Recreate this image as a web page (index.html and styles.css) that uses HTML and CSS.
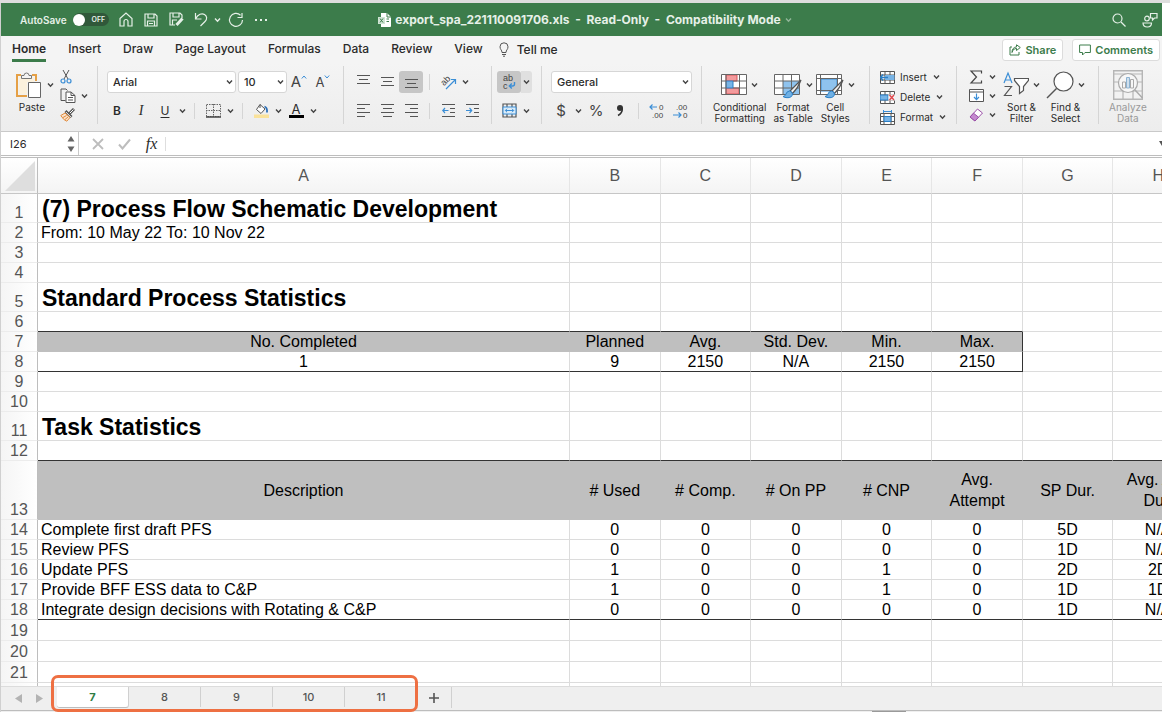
FILE: index.html
```html
<!DOCTYPE html>
<html lang="en">
<head>
    <meta charset="UTF-8">
    <meta name="viewport" content="width=device-width, initial-scale=1.0">
    <title>export_spa_221110091706.xls</title>
    <link rel="stylesheet" href="styles.css">
</head>
<body>
    <!-- shared icons -->
    <svg class="sprite" aria-hidden="true">
        <symbol id="chev" viewBox="0 0 7 6"><path d="M1 1.5l2.5 2.7L6 1.5" fill="none" stroke="currentColor" stroke-width="1.4"/></symbol>
        <symbol id="brush" viewBox="0 0 20 20">
            <path d="M19 1L8 12l2.500 2.500Q16 9 19 1z" fill="#f4f4f4" stroke="#555" stroke-width="1.2"/>
            <path d="M7.500 12q2.500.300 3 3-.5 4-5.500 3.700-2.500 0-4-1.200 2.500-.2 3-2.500.7-2.700 3.500-3z" fill="#6fb0e4" stroke="#2b7fc6"/>
        </symbol>
    </svg>

    <div class="window">
        <header class="titlebar">
            <div class="quick">
                <label class="autosave">AutoSave <input type="checkbox" class="toggle-input"><span class="toggle"><i></i>OFF</span></label>
                <button class="tb" aria-label="Home"><svg width="14" height="15" viewBox="0 0 14 15"><path d="M1 6.500L7 1l6 5.500V14H9V9.500a2 2 0 0 0-4 0V14H1z"/></svg></button>
                <button class="tb" aria-label="Save"><svg width="14" height="14" viewBox="0 0 14 14"><path d="M1 1h10l2 2v10H1zM4 1v4h6V1M3.500 13V8h7v5M5 10.500h4"/></svg></button>
                <button class="tb" aria-label="Save as"><svg width="15" height="15" viewBox="0 0 15 15"><path d="M6 13H1V1h10l2 2v3M4 1v4h6V1M3.500 13V8H8"/><path d="M13.500 6.500L7.500 13" stroke-width="3"/></svg></button>
                <button class="tb" aria-label="Undo"><svg width="14" height="15" viewBox="0 0 14 15"><path d="M1.500 1v6h6M1.500 7C4 2 8 1 10.500 2.500s3 4.500.5 7L6.500 14"/></svg></button>
                <button class="tb-chev" aria-label="Undo list"><svg width="7" height="6"><use href="#chev"/></svg></button>
                <button class="tb" aria-label="Redo"><svg width="16" height="16" viewBox="0 0 16 16"><path d="M12.500 3.200A6.500 6.500 0 1 0 14.500 8M14 1v4.500H9.500"/></svg></button>
                <button class="tb" aria-label="More"><svg width="14" height="4" viewBox="0 0 14 4"><path d="M1 2h2M6 2h2M11 2h2" stroke-width="2"/></svg></button>
            </div>
            <div class="doc-title">
                <svg width="13" height="14" viewBox="0 0 13 14"><path d="M3 0h6l4 4v9a1 1 0 0 1-1 1H3z" fill="#fff"/><path d="M9 0v4h4" fill="none" stroke="#3c7c4b"/><path d="M0 4h7v7H0z" fill="#cfe3d3"/><path d="M2 5.500l3 4M5 5.500l-3 4M8.500 6H11M8.500 8.500H11" stroke="#3c7c4b"/></svg>
                <span>export_spa_221110091706.xls&nbsp; -&nbsp; Read-Only&nbsp; -&nbsp; Compatibility Mode</span>
                <svg class="dim" width="7" height="6"><use href="#chev"/></svg>
            </div>
            <div class="title-right">
                <button class="tb" aria-label="Search"><svg width="14" height="14" viewBox="0 0 14 14"><circle cx="5.500" cy="5.500" r="4.500"/><path d="M9 9l4.500 4.500"/></svg></button>
                <button class="tb" aria-label="Presence"><svg width="16" height="16" viewBox="0 0 16 16"><circle cx="5" cy="6.500" r="2.300"/><path d="M1 11h8.500q0 4-4.200 4T1 11zM8.500 1.500H15v4.500h-2.500L10.500 8V6h-2z"/></svg></button>
            </div>
        </header>

        <nav class="tabs">
            <a href="#" class="active">Home</a>
            <a href="#">Insert</a>
            <a href="#">Draw</a>
            <a href="#">Page Layout</a>
            <a href="#">Formulas</a>
            <a href="#">Data</a>
            <a href="#">Review</a>
            <a href="#">View</a>
            <a href="#" class="tell"><svg width="10" height="15" viewBox="0 0 10 15"><path d="M3 10.500C3 8 1 7.500 1 4.800a4 4 0 0 1 8 0C9 7.500 7 8 7 10.500zM3 12.500h4M4 14.200h2" fill="none" stroke="#555"/></svg>Tell me</a>
            <div class="tabs-right">
                <button class="action"><svg width="12" height="12" viewBox="0 0 12 12"><path d="M3 3H1v8h9V8M3 8.500Q3.500 4.500 7.500 4.300V6.500L11.300 3.500 7.500.8v2Q3 3.500 3 8.500z"/></svg>Share</button>
                <button class="action"><svg width="12" height="12" viewBox="0 0 12 12"><path d="M.6 1h10.800v7.500H6L3.500 11V8.500H.6z"/></svg>Comments</button>
            </div>
        </nav>

        <div class="ribbon">
            <div class="group clipboard">
                <button class="big paste">
                    <span class="big-icon">
                        <svg width="27" height="28" viewBox="0 0 27 28"><path d="M5 4H1v21h10M16 4h4v6" fill="none" stroke="#e5a046" stroke-width="2"/><path d="M3 6h15v5h-7v12H3z" fill="#fbf1dd"/><path d="M5.500 7.500v-3H8a2.500 2.500 0 0 1 5 0h2.500v3z" fill="#f4f4f4" stroke="#777"/><path d="M12.500 11.500h12v15h-12z" fill="#fff" stroke="#666"/></svg>
                        <svg class="chev"><use href="#chev"/></svg>
                    </span>
                    <span>Paste</span>
                </button>
                <div class="stack">
                    <button class="mini" aria-label="Cut"><svg width="12" height="15" viewBox="0 0 12 15"><path d="M3 1l5 9M9 1l-5 9" fill="none" stroke="#555"/><circle cx="3" cy="12" r="2" fill="none" stroke="#3b8ed6" stroke-width="1.200"/><circle cx="9" cy="12" r="2" fill="none" stroke="#3b8ed6" stroke-width="1.200"/></svg></button>
                    <button class="mini" aria-label="Copy"><svg width="16" height="15" viewBox="0 0 16 15"><path d="M5.500 12.500H1V1h5l1.500 1.500" fill="none" stroke="#555"/><path d="M6 4h5l4 3.500V14.500H6zM11 4v3.500h4M8 9.500h5M8 12h5" fill="#fff" stroke="#555"/></svg><svg class="chev"><use href="#chev"/></svg></button>
                    <button class="mini" aria-label="Format painter"><svg width="15" height="14" viewBox="0 0 15 14"><path d="M14 1l-4.500 4.500" stroke="#555" stroke-width="3"/><path d="M13.500 1.500l-4 4" stroke="#fff"/><path d="M5.500 3l6 6" stroke="#555" stroke-width="2.600"/><path d="M6 4l5 5" stroke="#fff" stroke-width=".8"/><path d="M5 5L.8 7.500q3 5 6 5.700L10 9.500z" fill="#fbe3cb" stroke="#e08a3c"/><path d="M3 9.500l3.500-2M5 11.500l3-2.500" stroke="#e08a3c"/></svg></button>
                </div>
            </div>

            <div class="group font">
                <div class="row">
                    <span class="select name"><select aria-label="Font"><option>Arial</option></select><svg class="chev"><use href="#chev"/></svg></span>
                    <span class="select size"><select aria-label="Font size"><option>10</option></select><svg class="chev"><use href="#chev"/></svg></span>
                    <button class="ib grow" aria-label="Increase font size">A<svg width="6" height="4" viewBox="0 0 6 4"><path d="M.8 3.500L3 1l2.200 2.500"/></svg></button>
                    <button class="ib shrink" aria-label="Decrease font size">A<svg width="6" height="4" viewBox="0 0 6 4"><path d="M.8.500L3 3 5.200.500"/></svg></button>
                </div>
                <div class="row">
                    <button class="ib bold">B</button>
                    <button class="ib italic">I</button>
                    <button class="ib underline">U</button>
                    <button class="cb" aria-label="Underline styles"><svg class="chev"><use href="#chev"/></svg></button>
                    <span class="sep"></span>
                    <button class="ib" aria-label="Borders"><svg width="15" height="14" viewBox="0 0 15 14"><path d="M.5.500h14v12H.500zM7.500 0v12M0 6.500h15" fill="none" stroke="#666" stroke-dasharray="1.500 1"/><path d="M0 13h15" stroke="#444" stroke-width="1.500"/></svg></button>
                    <button class="cb" aria-label="Border styles"><svg class="chev"><use href="#chev"/></svg></button>
                    <span class="sep"></span>
                    <button class="ib" aria-label="Fill colour"><svg width="15" height="15" viewBox="0 0 15 15"><path d="M6 1.500l5 4.500-4 4.500L2.500 6.500zM6 1.500V5" fill="#fff" stroke="#555"/><path d="M10.500 3.500q3 1 2.500 6" fill="none" stroke="#2b6fb8" stroke-width="1.800"/><path d="M0 11.500h15V15H0z" fill="#fae29a"/></svg></button>
                    <button class="cb" aria-label="Fill colours"><svg class="chev"><use href="#chev"/></svg></button>
                    <button class="ib color">A<i></i></button>
                    <button class="cb" aria-label="Font colours"><svg class="chev"><use href="#chev"/></svg></button>
                </div>
            </div>

            <div class="group align">
                <div class="row">
                    <button class="ib" aria-label="Align top"><svg width="13" height="13" viewBox="0 0 13 13"><path class="ln" d="M0 .500h13M2 4.500h9M0 8.500h13" /></svg></button>
                    <button class="ib" aria-label="Align middle"><svg width="13" height="13" viewBox="0 0 13 13"><path class="ln" d="M0 2.500h13M2 6.500h9M0 10.500h13"/></svg></button>
                    <button class="ib on" aria-label="Align bottom"><svg width="13" height="13" viewBox="0 0 13 13"><path class="ln" d="M0 4.500h13M2 8.500h9M0 12.500h13"/></svg></button>
                    <span class="sep"></span>
                    <button class="ib" aria-label="Orientation"><svg width="18" height="16" viewBox="0 0 18 16"><text x="2" y="11" font-size="9" transform="rotate(-45 5 8)" fill="#444">ab</text><path d="M7 15l9-9M12 5.500h4.500V10" fill="none" stroke="#3b8ed6" stroke-width="1.200"/></svg></button>
                    <button class="cb" aria-label="Orientations"><svg class="chev"><use href="#chev"/></svg></button>
                </div>
                <div class="row">
                    <button class="ib" aria-label="Align left"><svg width="13" height="13" viewBox="0 0 13 13"><path class="ln" d="M0 .500h13M0 4.500h8M0 8.500h13M0 12.500h8"/></svg></button>
                    <button class="ib" aria-label="Center"><svg width="13" height="13" viewBox="0 0 13 13"><path class="ln" d="M0 .500h13M2 4.500h9M0 8.500h13M2 12.500h9"/></svg></button>
                    <button class="ib" aria-label="Align right"><svg width="13" height="13" viewBox="0 0 13 13"><path class="ln" d="M0 .500h13M5 4.500h8M0 8.500h13M5 12.500h8"/></svg></button>
                    <span class="sep"></span>
                    <button class="ib" aria-label="Decrease indent"><svg width="13" height="13" viewBox="0 0 13 13"><path class="ln" d="M0 .500h13M8 4.500h5M8 8.500h5M0 12.500h13"/><path class="bl" d="M6.500 6.500H1M3 4L.800 6.500 3 9"/></svg></button>
                    <button class="ib" aria-label="Increase indent"><svg width="13" height="13" viewBox="0 0 13 13"><path class="ln" d="M0 .500h13M8 4.500h5M8 8.500h5M0 12.500h13"/><path class="bl" d="M0 6.500h5.500M3.500 4l2.200 2.500L3.500 9"/></svg></button>
                </div>
            </div>

            <div class="group wrap">
                <div class="row">
                    <button class="ib on" aria-label="Wrap text"><svg width="14" height="20" viewBox="0 0 14 20"><text x="1" y="9" font-size="9" fill="#444">ab</text><text x="1" y="17" font-size="9" fill="#444">c</text><path d="M12.500 10v2q0 2-2 2H7.500M9.800 11.500L7.300 14l2.500 2.500" fill="none" stroke="#3b8ed6" stroke-width="1.400"/></svg></button>
                    <button class="cb half" aria-label="Wrap options"><svg class="chev"><use href="#chev"/></svg></button>
                </div>
                <div class="row">
                    <button class="ib" aria-label="Merge"><svg width="15" height="15" viewBox="0 0 15 15"><path d="M1 1h13v13H1zM5 1v3M10 1v3M5 11v3M10 11v3" fill="none" stroke="#555" stroke-width="1.200"/><path d="M1 4h13v7H1z" fill="#dcecf8" stroke="#3b8ed6"/><path d="M3.500 7.500h8M5 5.800L3.300 7.500 5 9.200M10 5.800l1.700 1.700L10 9.200" fill="none" stroke="#3b8ed6"/></svg></button>
                    <button class="cb" aria-label="Merge options"><svg class="chev"><use href="#chev"/></svg></button>
                </div>
            </div>

            <div class="group number">
                <div class="row">
                    <span class="select format"><select aria-label="Number format"><option>General</option></select><svg class="chev"><use href="#chev"/></svg></span>
                </div>
                <div class="row">
                    <button class="ib sign">$</button>
                    <button class="cb" aria-label="Currencies"><svg class="chev"><use href="#chev"/></svg></button>
                    <button class="ib sign">%</button>
                    <button class="ib" aria-label="Comma style"><svg width="8" height="13" viewBox="0 0 8 13"><circle cx="4" cy="4" r="3" fill="#333"/><path d="M6.300 4q.3 5-4.300 7.500" fill="none" stroke="#333" stroke-width="1.500"/></svg></button>
                    <span class="sep"></span>
                    <button class="ib" aria-label="Increase decimal"><svg width="16" height="20" viewBox="0 0 16 20"><text x="10" y="9" font-size="8" fill="#444">0</text><text x="3" y="17" font-size="8" fill="#444">.00</text><path class="bl" d="M1 6h7M3.500 3.500L1 6l2.500 2.500"/></svg></button>
                    <button class="ib" aria-label="Decrease decimal"><svg width="16" height="20" viewBox="0 0 16 20"><text x="3" y="9" font-size="8" fill="#444">.00</text><text x="10" y="17" font-size="8" fill="#444">0</text><path class="bl" d="M0 14h8M5.500 11.500L8 14l-2.500 2.500"/></svg></button>
                </div>
            </div>

            <div class="group styles">
                <button class="big">
                    <span class="big-icon">
                        <svg width="26" height="28" viewBox="0 0 26 28"><path d="M.5 3.500h25v20H.500z" fill="#fff"/><path d="M5 4h11v6H5zM5 17h13v6H5z" fill="#f39a9c" stroke="#d9575b"/><path d="M5 10h7v7H5z" fill="#78b4e6" stroke="#2b7fc6"/><path d="M.5 3.500h25v20H.500zM0 10h5M16 10h10M12 10h4M0 17h5M12 17h14M5 3v21M18.500 3v21" fill="none" stroke="#666"/></svg>
                        <svg class="chev"><use href="#chev"/></svg>
                    </span>
                    <span>Conditional<br>Formatting</span>
                </button>
                <button class="big">
                    <span class="big-icon">
                        <svg width="28" height="28" viewBox="0 0 28 28"><path d="M.5 3.500h25v20H.500z" fill="#fff"/><path d="M9 10h17v13H9z" fill="#8fc3ee"/><path d="M.5 3.500h25v20H.500zM0 10h26M0 17h26M9 3v21M17.500 3v21" fill="none" stroke="#666"/><use href="#brush" x="8" y="8" width="20" height="20"/></svg>
                        <svg class="chev"><use href="#chev"/></svg>
                    </span>
                    <span>Format<br>as Table</span>
                </button>
                <button class="big">
                    <span class="big-icon">
                        <svg width="28" height="28" viewBox="0 0 28 28"><path d="M.5 3.500h25v20H.500z" fill="#fff"/><path d="M5 8h16v12H5z" fill="#8fc3ee" stroke="#3b8ed6"/><path d="M.5 3.500h25v20H.500zM0 7.500h26M0 19.500h26M4.500 3v21M21.500 3v21" fill="none" stroke="#666"/><use href="#brush" x="8" y="8" width="20" height="20"/></svg>
                        <svg class="chev"><use href="#chev"/></svg>
                    </span>
                    <span>Cell<br>Styles</span>
                </button>
            </div>

            <div class="group cells">
                <div class="stack">
                    <button class="mini"><svg width="15" height="13" viewBox="0 0 15 13"><path d="M.5.500h14v12H.500zM5 0v13M10 0v13M0 4h15M0 9h15" fill="#fff" stroke="#555"/><path d="M5 4h9.500v5H5z" fill="#78b4e6"/><path d="M0 6.500h8M3 3.500L.500 6.500l2.500 3" fill="none" stroke="#2b7fc6" stroke-width="1.400"/></svg>Insert<svg class="chev"><use href="#chev"/></svg></button>
                    <button class="mini"><svg width="15" height="13" viewBox="0 0 15 13"><path d="M.5.500h14v12H.500zM5 0v13M10 0v13M0 4h15M0 9h15" fill="#fff" stroke="#555"/><path d="M0 4h8v5H0z" fill="#78b4e6" stroke="#2b7fc6"/><path d="M8.500 3.500h6.500v6H8.500z" fill="#f3f3f3"/><path d="M9.500 4l4.500 5M14 4L9.500 9" stroke="#e0474c" stroke-width="1.400"/></svg>Delete<svg class="chev"><use href="#chev"/></svg></button>
                    <button class="mini"><svg width="15" height="15" viewBox="0 0 15 15"><path d="M.5 3.500h14v11H.500zM4 3v12M11 3v12M0 6.500h15M0 11.500h15" fill="#fff" stroke="#555"/><path d="M4 6.500h7v5H4z" fill="#78b4e6" stroke="#2b7fc6"/><path d="M3.500 0v3M11.500 0v3M4 1.500h7" stroke="#3b8ed6"/></svg>Format<svg class="chev"><use href="#chev"/></svg></button>
                </div>
            </div>

            <div class="group editing">
                <div class="stack">
                    <button class="mini" aria-label="AutoSum"><svg width="15" height="14" viewBox="0 0 15 14"><path d="M12.500 3.500V1H2l5.500 6L2 13h10.500v-2.500" fill="none" stroke="#444" stroke-width="1.200"/></svg><svg class="chev"><use href="#chev"/></svg></button>
                    <button class="mini" aria-label="Fill"><svg width="15" height="13" viewBox="0 0 15 13"><path d="M.5.500h14v12H.500zM0 3h15" fill="#fff" stroke="#555"/><path class="bl" d="M7.500 4.500v6M5 8l2.500 2.700L10 8"/></svg><svg class="chev"><use href="#chev"/></svg></button>
                    <button class="mini" aria-label="Clear"><svg width="15" height="14" viewBox="0 0 15 14"><path d="M8.500 1l5 4-7.500 8-5-4z" fill="#fff" stroke="#9b4fa8"/><path d="M4.500 5.200l5 4L6 13 1 9z" fill="#c489cf" stroke="#9b4fa8"/></svg><svg class="chev"><use href="#chev"/></svg></button>
                </div>
                <button class="big">
                    <span class="big-icon">
                        <svg width="26" height="28" viewBox="0 0 26 28"><path d="M1 12L5 2l4 10M2.500 9h5" fill="none" stroke="#3b8ed6" stroke-width="1.200"/><path d="M1.500 15.500h7l-7 9h7.500" fill="none" stroke="#555" stroke-width="1.200"/><path d="M11.500 7.500h14v2l-5 6v4l-4 3v-7l-5-6z" fill="#fff" stroke="#555" stroke-width="1.200"/></svg>
                        <svg class="chev"><use href="#chev"/></svg>
                    </span>
                    <span>Sort &amp;<br>Filter</span>
                </button>
                <button class="big">
                    <span class="big-icon">
                        <svg width="28" height="28" viewBox="0 0 28 28"><circle cx="17.500" cy="10.500" r="9.500" fill="#fff" stroke="#555" stroke-width="1.200"/><path d="M10.500 17.500L1 27" stroke="#555" stroke-width="1.400"/></svg>
                        <svg class="chev"><use href="#chev"/></svg>
                    </span>
                    <span>Find &amp;<br>Select</span>
                </button>
            </div>

            <div class="group analyze">
                <button class="big" disabled>
                    <span class="big-icon">
                        <svg width="30" height="30" viewBox="0 0 30 30"><path d="M.7.700h28.600v28.600H.700z" fill="#f2f2f2" stroke="#b5b5b5" stroke-width="1.400"/><path d="M1 4h28M1 21h28M1 12h6M24 12h5M10 21v8M20 21v8" stroke="#b5b5b5" stroke-width="1.200"/><circle cx="15" cy="13" r="9.500" fill="#f7f7f7" stroke="#aaa" stroke-width="1.200"/><path d="M9.500 12h3v6h-3zM17.500 9.500h3V18h-3z" fill="#f7f7f7" stroke="#a9a9a9"/><path d="M13.500 7.500h3V18h-3z" fill="#cfe0ee" stroke="#8db2d0"/><path d="M22 20l7.500 8" stroke="#aaa" stroke-width="1.400"/></svg>
                    </span>
                    <span>Analyze<br>Data</span>
                </button>
            </div>
        </div>

        <div class="formula-bar">
            <div class="name-box">
                <input type="text" value="I26" aria-label="Name box">
                <svg width="8" height="16" viewBox="0 0 8 16"><path d="M4 0l3.500 5.500h-7zM4 16L.500 10.500h7z" fill="#666"/></svg>
            </div>
            <button class="fb" aria-label="Cancel"><svg width="12" height="12" viewBox="0 0 12 12"><path d="M1 1l10 10M11 1L1 11" fill="none" stroke="#bdbdbd" stroke-width="1.800"/></svg></button>
            <button class="fb" aria-label="Enter"><svg width="13" height="12" viewBox="0 0 13 12"><path d="M1 6.500L4.500 10.500 12 1.500" fill="none" stroke="#bdbdbd" stroke-width="2"/></svg></button>
            <button class="fb fx">fx</button>
            <input type="text" class="formula" aria-label="Formula">
            <svg class="expand" width="3" height="5" viewBox="0 0 3 5"><path d="M0 0h6L3 5z" fill="#555"/></svg>
        </div>

        <div class="sheet">
            <table>
                <colgroup><col class="c-num"><col class="c-a"><col><col><col><col><col><col><col></colgroup>
                <thead>
                    <tr><th class="corner"><svg width="30" height="30" viewBox="0 0 30 30"><path d="M30 0v30H0z" fill="#dedede"/></svg></th><th>A</th><th>B</th><th>C</th><th>D</th><th>E</th><th>F</th><th>G</th><th>H</th></tr>
                </thead>
                <tbody>
                    <tr class="heading first"><th>1</th><td>(7) Process Flow Schematic Development</td><td></td><td></td><td></td><td></td><td></td><td></td><td></td></tr>
                    <tr><th>2</th><td class="left">From: 10 May 22 To: 10 Nov 22</td><td></td><td></td><td></td><td></td><td></td><td></td><td></td></tr>
                    <tr><th>3</th><td></td><td></td><td></td><td></td><td></td><td></td><td></td><td></td></tr>
                    <tr><th>4</th><td></td><td></td><td></td><td></td><td></td><td></td><td></td><td></td></tr>
                    <tr class="heading"><th>5</th><td>Standard Process Statistics</td><td></td><td></td><td></td><td></td><td></td><td></td><td></td></tr>
                    <tr class="before-stats"><th>6</th><td></td><td></td><td></td><td></td><td></td><td></td><td></td><td></td></tr>
                    <tr class="stats-head"><th>7</th><td>No. Completed</td><td>Planned</td><td>Avg.</td><td>Std. Dev.</td><td>Min.</td><td>Max.</td><td></td><td></td></tr>
                    <tr class="stats"><th>8</th><td>1</td><td>9</td><td>2150</td><td>N/A</td><td>2150</td><td>2150</td><td></td><td></td></tr>
                    <tr><th>9</th><td></td><td></td><td></td><td></td><td></td><td></td><td></td><td></td></tr>
                    <tr><th>10</th><td></td><td></td><td></td><td></td><td></td><td></td><td></td><td></td></tr>
                    <tr class="heading"><th>11</th><td>Task Statistics</td><td></td><td></td><td></td><td></td><td></td><td></td><td></td></tr>
                    <tr class="line"><th>12</th><td></td><td></td><td></td><td></td><td></td><td></td><td></td><td></td></tr>
                    <tr class="task-head"><th>13</th><td>Description</td><td># Used</td><td># Comp.</td><td># On PP</td><td># CNP</td><td>Avg.<br>Attempt</td><td>SP Dur.</td><td>Avg. Act.<br>Dur.</td></tr>
                    <tr><th>14</th><td class="left">Complete first draft PFS</td><td>0</td><td>0</td><td>0</td><td>0</td><td>0</td><td>5D</td><td>N/A</td></tr>
                    <tr><th>15</th><td class="left">Review PFS</td><td>0</td><td>0</td><td>0</td><td>0</td><td>0</td><td>1D</td><td>N/A</td></tr>
                    <tr><th>16</th><td class="left">Update PFS</td><td>1</td><td>0</td><td>0</td><td>1</td><td>0</td><td>2D</td><td>2D</td></tr>
                    <tr><th>17</th><td class="left">Provide BFF ESS data to C&amp;P</td><td>1</td><td>0</td><td>0</td><td>1</td><td>0</td><td>1D</td><td>1D</td></tr>
                    <tr class="line"><th>18</th><td class="left">Integrate design decisions with Rotating &amp; C&amp;P</td><td>0</td><td>0</td><td>0</td><td>0</td><td>0</td><td>1D</td><td>N/A</td></tr>
                    <tr class="tall"><th>19</th><td></td><td></td><td></td><td></td><td></td><td></td><td></td><td></td></tr>
                    <tr class="tall"><th>20</th><td></td><td></td><td></td><td></td><td></td><td></td><td></td><td></td></tr>
                    <tr class="tall"><th>21</th><td></td><td></td><td></td><td></td><td></td><td></td><td></td><td></td></tr>
                    <tr class="tall"><th></th><td></td><td></td><td></td><td></td><td></td><td></td><td></td><td></td></tr>
                </tbody>
            </table>
        </div>

        <footer class="sheet-bar">
            <button class="arrow" aria-label="Previous sheet"><svg width="7" height="9" viewBox="0 0 7 9"><path d="M7 0v9L0 4.500z" fill="#b3b3b3"/></svg></button>
            <button class="arrow" aria-label="Next sheet"><svg width="7" height="9" viewBox="0 0 7 9"><path d="M0 0v9l7-4.500z" fill="#b3b3b3"/></svg></button>
            <div class="sheet-tabs">
                <button class="current">7</button>
                <button>8</button>
                <button>9</button>
                <button>10</button>
                <button>11</button>
            </div>
            <button class="add" aria-label="Add sheet"><svg width="10" height="10" viewBox="0 0 10 10"><path d="M5 0v10M0 5h10" stroke="#555" stroke-width="1.600"/></svg></button>
        </footer>
        <div class="bottom-edge"><span></span></div>
    </div>
</body>
</html>
```
FILE: styles.css
```css
* {
    box-sizing: border-box;
}
body {
    margin: 0;
    background-color: #fff;
    border-top: 3px solid #dedede;
    font-family: Inter, "Liberation Sans", sans-serif;
    color: #2b2b2b;
}
button, input, select {
    font-family: inherit;
    color: inherit;
    border: none;
    padding: 0;
    margin: 0;
    background: none;
}
svg {
    display: block;
    flex: none;
}
.sprite {
    position: absolute;
    width: 0;
    height: 0;
}
.window {
    display: flex;
    flex-direction: column;
    height: calc(100vh - 3px);
    margin-right: 8px;
    border-left: 1px solid #d0d0d0;
    overflow: hidden;
}

/* title bar */
.titlebar {
    display: grid;
    grid-template-columns: 1fr auto 1fr;
    align-items: center;
    flex: none;
    height: 33px;
    padding-left: 19px;
    background-color: #3c7c4b;
    color: #e6f0e8;
}
.quick, .doc-title, .title-right, .autosave {
    display: flex;
    align-items: center;
}
.autosave {
    gap: 6px;
    margin-right: 5px;
    font-size: 10px;
    font-weight: 600;
}
.toggle-input {
    position: absolute;
    opacity: 0;
}
.toggle {
    display: flex;
    align-items: center;
    gap: 7px;
    width: 36px;
    height: 13px;
    border-radius: 7px;
    background-color: #30583a;
    font-size: 7px;
}
.toggle i {
    width: 12px;
    height: 12px;
    border-radius: 50%;
    background-color: #fff;
}
.tb {
    display: flex;
    align-items: center;
    justify-content: center;
    width: 25px;
    height: 24px;
}
.tb svg {
    fill: none;
    stroke: #e6f0e8;
    stroke-width: 1.2;
}
.tb-chev {
    width: 10px;
}
.doc-title {
    gap: 4px;
    margin-right: 12px;
    font-size: 12px;
    font-weight: 700;
}
.dim {
    opacity: 0.5;
}
.title-right {
    justify-content: flex-end;
    gap: 6px;
}

/* ribbon tabs */
.tabs {
    display: flex;
    align-items: center;
    gap: 22px;
    flex: none;
    height: 27px;
    padding: 0 2px 0 11px;
    background-color: #f4f4f4;
    font-size: 12px;
    font-weight: 500;
}
.tabs a {
    display: flex;
    height: 25px;
    line-height: 24px;
    color: #2b2b2b;
    text-decoration: none;
}
.tabs .active {
    font-weight: 600;
    border-bottom: 3px solid #3c7c4b;
}
.tabs .tell {
    align-items: center;
    gap: 8px;
    margin-left: -6px;
}
.tabs-right {
    display: flex;
    gap: 9px;
    margin-left: auto;
}
.action {
    display: flex;
    align-items: center;
    gap: 4px;
    height: 22px;
    padding: 0 6px;
    border: 1px solid #dcdcdc;
    border-radius: 3px;
    background-color: #fff;
    color: #3c7c4b;
    font-size: 11px;
    font-weight: 600;
}
.action svg {
    fill: none;
    stroke: #3c7c4b;
}

/* ribbon */
.ribbon {
    display: flex;
    flex: none;
    height: 68px;
    padding: 3px 0 7px;
    background: linear-gradient(#f4f4f4, #ededed);
}
.group {
    flex: none;
    padding: 1px 0 0 7px;
    border-right: 1px solid #d5d5d5;
}
.clipboard {
    display: flex;
    gap: 6px;
    width: 97px;
    padding-left: 15px;
}
.font {
    width: 246px;
}
.align {
    width: 148px;
}
.wrap {
    width: 50px;
    padding-left: 5px;
}
.number {
    width: 160px;
}
.styles {
    display: flex;
    gap: 7px;
    width: 168px;
    padding-left: 11px;
}
.cells {
    width: 87px;
    padding-left: 10px;
}
.editing {
    display: flex;
    gap: 14px;
    width: 142px;
    padding-left: 12px;
}
.analyze {
    padding-left: 10px;
    border-right: none;
}
.row {
    display: flex;
    align-items: center;
    height: 29px;
}
.chev {
    width: 7px;
    height: 6px;
    color: #444;
}
.ib, .cb {
    display: flex;
    align-items: center;
    justify-content: center;
    width: 24px;
    height: 22px;
}
.cb {
    width: 11px;
}
.ib.on {
    border-radius: 3px;
    background-color: #c6c6c6;
}
.cb.half {
    border-radius: 0 3px 3px 0;
    background-color: #e0e0e0;
}
.sep {
    width: 1px;
    height: 16px;
    margin: 0 6px;
    background-color: #d5d5d5;
}
.ln {
    fill: none;
    stroke: #555;
}
.bl {
    fill: none;
    stroke: #3b8ed6;
    stroke-width: 1.2;
}
.ib text {
    font-family: "Liberation Sans", sans-serif;
}
.bold {
    font-size: 12px;
    font-weight: 600;
}
.italic {
    font-family: "Liberation Serif", serif;
    font-size: 14px;
    font-style: italic;
}
.underline {
    font-size: 12px;
    text-decoration: underline;
    text-underline-offset: 2px;
}
.color {
    flex-direction: column;
    font-size: 13px;
    line-height: 12px;
}
.color i {
    width: 15px;
    height: 3px;
    background-color: #000;
}
.grow, .shrink {
    align-items: flex-start;
    font-size: 15px;
    line-height: 22px;
    color: #444;
}
.shrink {
    font-size: 13px;
}
.ib.grow svg, .ib.shrink svg {
    margin-top: 4px;
    fill: none;
    stroke: #3b8ed6;
}
.sign {
    font-size: 15px;
    color: #444;
}

/* drop-downs with the arrow laid over the right end */
.select {
    display: grid;
    align-items: center;
    margin-left: 2px;
}
.select select {
    grid-area: 1 / 1;
    width: 100%;
    height: 22px;
    padding: 0 5px;
    border: 1px solid #d6d6d6;
    border-radius: 3px;
    background-color: #fff;
    appearance: none;
    font-size: 11px;
    font-weight: 500;
}
.select .chev {
    grid-area: 1 / 1;
    justify-self: end;
    margin-right: 3px;
    pointer-events: none;
}
.select.name {
    width: 129px;
}
.select.size {
    width: 49px;
}
.select.format {
    width: 141px;
}

/* large and small ribbon buttons */
.big {
    display: flex;
    flex-direction: column;
    justify-content: flex-start;
    height: 58px;
    font-size: 10px;
    line-height: 11px;
    text-align: center;
    white-space: nowrap;
}
.big > span {
    align-self: stretch;
}
.big-icon {
    display: flex;
    align-items: center;
    justify-content: center;
    gap: 4px;
    height: 35px;
}
.paste > span:last-child {
    padding-right: 6px;
}
.styles .big-icon, .editing .big-icon {
    margin: 0 -4px;
}
.big:disabled {
    color: #999;
}
.stack {
    display: flex;
    flex-direction: column;
}
.editing .stack {
    margin-right: -3px;
}
.mini {
    display: flex;
    align-items: center;
    gap: 5px;
    height: 20px;
    font-size: 10px;
}
.cells .mini .chev {
    margin-left: 1px;
}

/* formula bar */
.formula-bar {
    display: flex;
    align-items: center;
    flex: none;
    height: 27px;
    border-top: 1px solid #c9c9c9;
    border-bottom: 3px double #bdbdbd;
    background-color: #fff;
}
.name-box {
    display: flex;
    align-items: center;
    width: 78px;
    height: 100%;
    padding: 0 3px 0 9px;
    border-right: 1px solid #c9c9c9;
}
.name-box input {
    flex: 1;
    min-width: 0;
    font-size: 11px;
}
.fb {
    display: flex;
    align-items: center;
    justify-content: center;
    width: 27px;
    height: 22px;
}
.name-box + .fb {
    margin-left: 5px;
}
.fx {
    font-family: "Liberation Serif", serif;
    font-size: 16px;
    font-style: italic;
}
.formula {
    flex: 1;
    min-width: 0;
    height: 14px;
    border-left: 1px solid #dedede;
}

/* grid */
.sheet {
    flex: 1;
    min-height: 0;
    overflow: hidden;
    font-family: "Liberation Sans", Arial, sans-serif;
}
.sheet table {
    width: 1203px;
    min-width: 100%;
    table-layout: fixed;
    border-spacing: 0;
}
.c-num {
    width: 37px;
}
.c-a {
    width: 532px;
}
.sheet th, .sheet td {
    height: 20px;
    padding: 0;
    border-right: 1px solid #dcdcdc;
    border-bottom: 1px solid #dcdcdc;
    font-size: 16px;
    line-height: 18px;
    text-align: center;
    vertical-align: bottom;
    color: #000;
    white-space: nowrap;
}
.sheet th {
    font-weight: 400;
    color: #555;
}
.sheet thead th {
    height: 36px;
    vertical-align: middle;
    border-right-color: #e6e6e6;
    border-bottom-color: #c6c6c6;
    background: linear-gradient(#fff, #f4f4f4);
}
.sheet tbody th {
    border-right-color: #bdbdbd;
    border-bottom-color: #ececec;
    background: linear-gradient(90deg, #f5f5f5, #fff);
}
.sheet thead .corner {
    padding-left: 4px;
    border-right-color: #bdbdbd;
}
.sheet .left {
    padding-left: 3px;
    text-align: left;
}
.sheet .heading td {
    height: 29px;
    padding-left: 4px;
    font-size: 23px;
    font-weight: 700;
    line-height: 26px;
    text-align: left;
}
.sheet .tall td {
    height: 21px;
}
.sheet .line td,
.sheet .stats td:nth-child(-n+7),
.sheet .before-stats td:nth-child(-n+7) {
    border-bottom-color: #333;
}
.stats-head td:nth-child(-n+7),
.task-head td {
    background-color: #bfbfbf;
}
.sheet .stats-head td:nth-child(-n+7),
.sheet .task-head td {
    border-color: #bfbfbf;
}
.sheet .stats-head td:nth-child(7),
.sheet .stats td:nth-child(7) {
    border-right-color: #333;
}
.sheet .task-head td {
    height: 59px;
    line-height: 21px;
    vertical-align: middle;
}

/* sheet tabs */
.sheet-bar {
    display: flex;
    flex: none;
    height: 24px;
    border-top: 1px solid #dcdcdc;
    background-color: #efefef;
}
.arrow {
    display: flex;
    align-items: center;
    justify-content: center;
    width: 21px;
}
.arrow:first-child {
    margin-left: 7px;
}
.sheet-tabs {
    position: relative;
    display: flex;
    margin-left: 6px;
}
.sheet-tabs::after {
    content: "";
    position: absolute;
    inset: -12px -1px -2px -5px;
    border: 3px solid #ee7043;
    border-radius: 7px;
    pointer-events: none;
}
.sheet-tabs button {
    width: 72px;
    height: 20px;
    border-right: 1px solid #d0d0d0;
    font-size: 11px;
    font-weight: 500;
    color: #555;
}
.sheet-tabs button:last-child {
    border-right: none;
}
.sheet-tabs .current {
    height: 21px;
    margin-left: 1px;
    border-bottom: 1px solid #bdbdbd;
    border-radius: 0 0 3px 3px;
    background-color: #fff;
    color: #2f7d43;
    font-weight: 700;
}
.add {
    display: flex;
    align-items: center;
    justify-content: center;
    width: 35px;
    height: 21px;
    border-right: 1px solid #d0d0d0;
}
.bottom-edge {
    flex: none;
    height: 2px;
    border-top: 1px solid #bdbdbd;
    background-color: #efefef;
}
.bottom-edge span {
    display: block;
    width: 34px;
    height: 1px;
    margin-left: 75%;
    background-color: #9a9a9a;
}
```
